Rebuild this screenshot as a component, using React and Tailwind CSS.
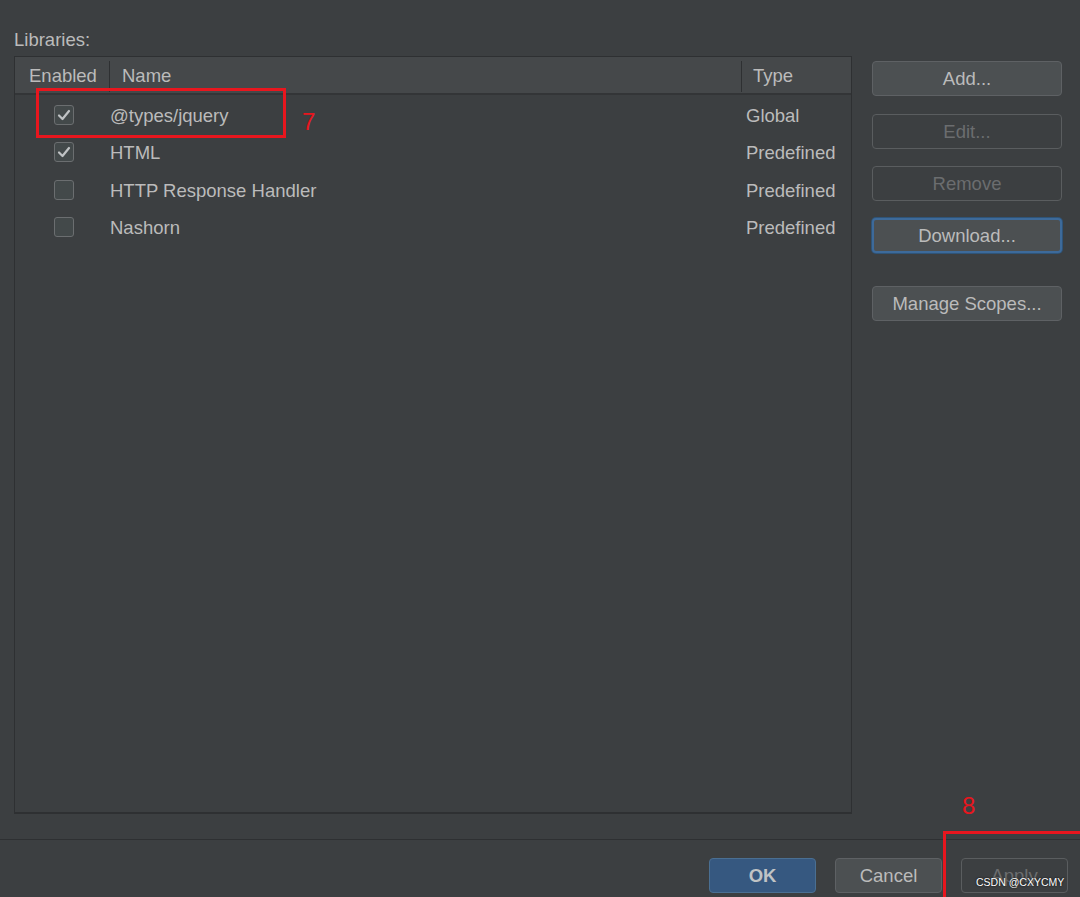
import React from "react";

const rows = [
  { name: "@types/jquery", type: "Global", on: true },
  { name: "HTML", type: "Predefined", on: true },
  { name: "HTTP Response Handler", type: "Predefined", on: false },
  { name: "Nashorn", type: "Predefined", on: false },
];

function Check({ on }) {
  return (
    <div className="w-[20px] h-[20px] rounded-[3px] border border-[#6b6e70] bg-[#43494a] flex items-center justify-center">
      {on && (
        <svg width="14" height="12" viewBox="0 0 14 12">
          <path d="M2 6.5 L5.5 10 L12 2" fill="none" stroke="#bfc2c4" strokeWidth="2.2" strokeLinecap="round" strokeLinejoin="round" />
        </svg>
      )}
    </div>
  );
}

function Btn({ children, disabled, focus, className = "" }) {
  return (
    <div
      className={
        "h-[35px] w-[190px] rounded-[4px] flex items-center justify-center text-[18.5px] " +
        (disabled
          ? "border border-[#5a5d5f] text-[#6b6d6f] bg-[#3c3f41] "
          : focus
          ? "border-2 border-[#3d6a9a] bg-[#4c5052] text-[#bbbbbb] shadow-[0_0_0_1px_#2f5478] "
          : "border border-[#5e6164] bg-[#4c5052] text-[#bbbbbb] ") +
        className
      }
    >
      {children}
    </div>
  );
}

export default function App() {
  return (
    <div
      className="relative w-[1080px] h-[897px] overflow-hidden bg-[#3c3f41] text-[#bbbbbb]"
      style={{ fontFamily: '"Liberation Sans", Arial, sans-serif' }}
    >
      <div className="pt-[29px] px-[14px]">
        <div className="text-[18.5px] leading-[22px]">Libraries:</div>
        <div className="mt-[5px] flex">
          {/* table */}
          <div className="w-[838px] h-[758px] border border-[#2e3032] border-b-2 flex flex-col bg-[#3c3f41]">
            <div className="h-[38px] bg-[#45484a] border-b-2 border-[#333537] flex text-[18.5px]">
              <div className="w-[95px] flex items-center pt-[2px]">
                <span className="pl-[14px] flex-1">Enabled</span>
                <div className="w-px h-[31px] bg-[#2e3032]" />
              </div>
              <div className="w-[632px] flex items-center pt-[2px]">
                <span className="pl-[12px] flex-1">Name</span>
                <div className="w-px h-[31px] bg-[#2e3032]" />
              </div>
              <div className="flex-1 flex items-center pt-[2px]">
                <span className="pl-[11px]">Type</span>
              </div>
            </div>
            <div className="pt-[1px]">
              {rows.map((r) => (
                <div key={r.name} className="h-[37.5px] flex items-center text-[18.5px]">
                  <div className="w-[95px] pl-[39px]">
                    <Check on={r.on} />
                  </div>
                  <div className="w-[636px] whitespace-nowrap pt-[2px]">{r.name}</div>
                  <div className="flex-1 whitespace-nowrap pt-[2px]">{r.type}</div>
                </div>
              ))}
            </div>
          </div>
          {/* side buttons */}
          <div className="ml-[20px] mt-[5px] flex flex-col">
            <Btn>Add...</Btn>
            <Btn disabled className="mt-[18px]">Edit...</Btn>
            <Btn disabled className="mt-[17px]">Remove</Btn>
            <Btn focus className="mt-[17px]">Download...</Btn>
            <Btn className="mt-[33px]">Manage Scopes...</Btn>
          </div>
        </div>
      </div>
      <div className="mt-[25px] h-px bg-[#2e3032]" />
      <div className="mt-[18px] flex justify-end pr-[12px] gap-[19px] text-[18.5px]">
        <div className="h-[35px] w-[107px] rounded-[4px] border border-[#4a6f92] bg-[#365880] flex items-center justify-center font-bold text-[#c0c3c5]">
          OK
        </div>
        <div className="h-[35px] w-[107px] rounded-[4px] border border-[#5e6164] bg-[#4c5052] flex items-center justify-center">
          Cancel
        </div>
        <div className="h-[35px] w-[107px] rounded-[4px] border border-[#5a5d5f] flex items-center justify-center text-[#6b6d6f]">
          Apply
        </div>
      </div>

      {/* annotations */}
      <div className="absolute left-[36px] top-[88px] w-[250px] h-[50px] border-[3px] border-[#e8161e]" />
      <div className="absolute left-[302px] top-[108px] text-[24px] leading-[28px] text-[#e8161e]">7</div>
      <div className="absolute left-[962px] top-[792px] text-[24px] leading-[28px] text-[#e8161e]">8</div>
      <div className="absolute left-[943px] top-[831px] w-[160px] h-[100px] border-l-[3px] border-t-[3px] border-[#e8161e]" />
      <div
        className="absolute left-[976px] top-[875px] text-[10.5px] leading-[14px] text-white"
        style={{ textShadow: "0 0 2px #000" }}
      >
        CSDN @CXYCMY
      </div>
    </div>
  );
}
